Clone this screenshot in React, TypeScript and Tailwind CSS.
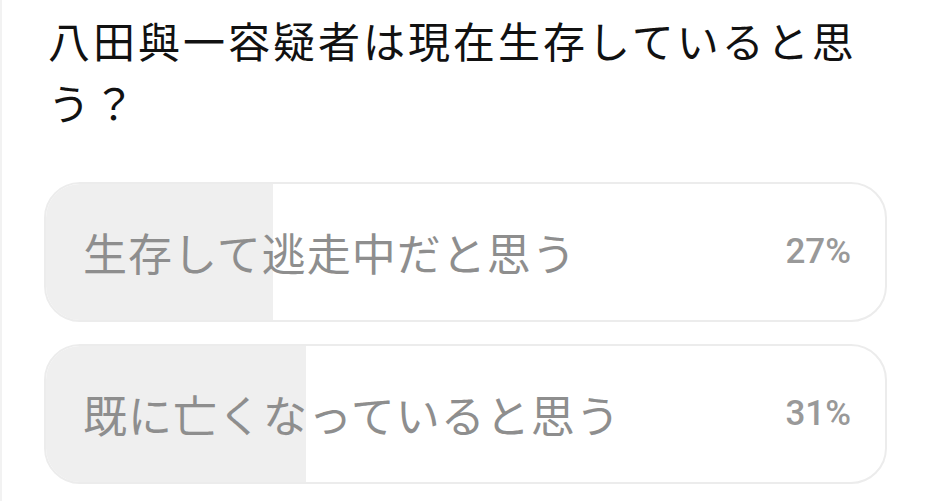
const options = [
  { label: '生存して逃走中だと思う', pct: 27 },
  { label: '既に亡くなっていると思う', pct: 31 },
];

export default function App() {
  return (
    <div
      className="w-[932px] h-[501px] overflow-hidden bg-white border-l-2 border-[#f2f2f2]"
      style={{ fontFamily: '"Noto Sans CJK JP", "Noto Sans", sans-serif' }}
    >
      <h1 className="pl-[46px] pr-[20px] pt-[9px] text-[42px] leading-[62px] tracking-[3px] font-normal text-[#111111]">
        八田與一容疑者は現在生存していると思う？
      </h1>
      <div className="mt-[49px] ml-[42px] w-[843px] flex flex-col gap-[22px]">
        {options.map((o) => (
          <div
            key={o.label}
            className="relative h-[140px] rounded-[36px] border-2 border-[#ececec] overflow-hidden flex items-center justify-between pl-[37px] pr-[34px]"
          >
            <div
              className="absolute left-0 top-0 bottom-0 bg-[#efefef]"
              style={{ width: `${o.pct}%` }}
            />
            <span className="relative text-[44px] tracking-[1px] text-[#8e8e8e]">{o.label}</span>
            <span
              className="relative text-[35px] font-medium text-[#999999]"
              style={{ fontFamily: 'Roboto, "Liberation Sans", sans-serif' }}
            >
              {o.pct}%
            </span>
          </div>
        ))}
      </div>
    </div>
  );
}
